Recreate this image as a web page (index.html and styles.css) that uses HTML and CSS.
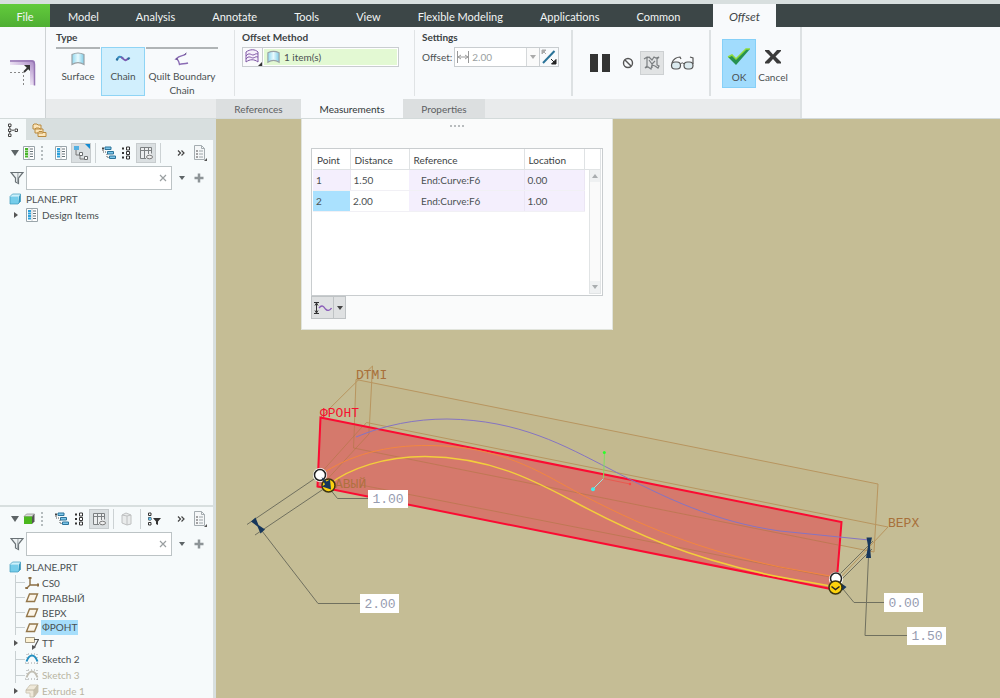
FILE: index.html
```html
<!DOCTYPE html>
<html lang="en">
<head>
<meta charset="utf-8">
<title>PLANE.PRT - Offset</title>
<link rel="stylesheet" href="styles.css">
</head>
<body>
<svg class="sprite" aria-hidden="true">
  <defs>
    <linearGradient id="blue" x1="0" x2="1"><stop offset="0" stop-color="#8fd8f0"/><stop offset=".5" stop-color="#e8fafe"/><stop offset="1" stop-color="#7ccce8"/></linearGradient>
    <linearGradient id="purple" x1="0" x2="1" y1="1" y2="0"><stop offset=".4" stop-color="#efe6f5"/><stop offset="1" stop-color="#a583c2"/></linearGradient>
  </defs>
  <symbol id="i-surface" viewBox="0 0 16 14"><path d="M2 2.500C6 .5 10 .5 14 2.500V12.500C10 10 6 10 2 12.500Z" fill="url(#blue)" stroke="#9aa2a6" stroke-width="1.200"/></symbol>
  <symbol id="i-caret" viewBox="0 0 8 6"><path d="M1 1h6L4 5z" fill="currentColor"/></symbol>
  <symbol id="i-dcaret" viewBox="0 0 8 8"><path d="M0 1h8L4 7z" fill="#5d6466"/></symbol>
  <symbol id="i-list" viewBox="0 0 12 14"><path d="M.5 .5h11v13H.5z" fill="#fff" stroke="#9aa5aa"/><path d="M2 3h3M2 5.500h3M2 8h3M2 10.500h3" stroke="currentColor" stroke-width="2"/><path d="M7 3h3M7 5.500h3M7 8h3M7 10.500h3" stroke="#667378"/><path d="M6 1v12" stroke="#9da8ad" stroke-width=".6"/></symbol>
  <symbol id="i-tree" viewBox="0 0 14 14"><path d="M1 4v2h4M5 8v3.500h3" fill="none" stroke="#555" stroke-dasharray="1 1"/><path d="M0 1.500h2v2H0z" fill="#444"/><path d="M3 1h6v2.500H3zM5.500 5.500h6V8h-6zM7.500 10h6v2.500h-6z" fill="#7cc6ea" stroke="#2b7399"/></symbol>
  <symbol id="i-struct" viewBox="0 0 8 14"><path d="M4.500 1h3v3h-3zM4.500 5.500h3v3h-3zM4.500 10h3v3h-3z" fill="#fff" stroke="#333"/><path d="M0 1.500h2v2H0zM0 6h2v2H0zM0 10.500h2v2H0z" fill="#333"/></symbol>
  <symbol id="i-cols" viewBox="0 0 14 14"><path d="M1.500 1.500h11v11h-11z" fill="#eceeef"/><path d="M1.500 12.500v-11h11v6M1.500 4.500h11M5.500 2v10.500M9.500 2v6M1.500 12.500H7" fill="none" stroke="#7c8082"/><ellipse cx="10.500" cy="11" rx="3" ry="1.800" fill="#eee" stroke="#777"/></symbol>
  <symbol id="i-page" viewBox="0 0 14 16"><path d="M1.500 .5h7l3 3v11h-10z" fill="#f5f7f8" stroke="#a5adb1"/><path d="M8.500 .5v3h3" fill="none" stroke="#a5adb1"/><path d="M3 6h2M3 9h2M3 12h2" stroke="#888" stroke-width="1.500"/><path d="M6 6h4M6 9h4M6 12h4" stroke="#9ba4a8"/><path d="M14 13v3h-3z" fill="#555"/></symbol>
  <symbol id="i-funnel" viewBox="0 0 14 14"><path d="M1 1.500h12L8.500 7v5.500l-3-1.500V7z" fill="#edf2f3" stroke="#6a7276" stroke-width="1.200"/><path d="M8 2L7.500 12" stroke="#9aa2a6"/></symbol>
  <symbol id="i-plus" viewBox="0 0 10 10"><path d="M5 .5v9M.5 5h9" stroke="#8d9497" stroke-width="2.500"/></symbol>
  <symbol id="i-part" viewBox="0 0 12 12"><path d="M1 3.500L3.500 1h8L10 3.500z" fill="#cdf1fb"/><path d="M10 3.500L11.500 1v7.500L9 11z" fill="#2f93bb"/><path d="M1 3.500h8.500V11H1z" fill="#76cdea"/><path d="M1 3.500L3.500 1h8v7.500L9 11H1z" fill="none" stroke="#3c98bc" stroke-width=".7"/></symbol>
  <symbol id="i-plane" viewBox="0 0 14 12"><path d="M4.500 2h8L9.500 9.500h-8z" fill="#fbf5e9" stroke="#94774a" stroke-width="1.400"/></symbol>
  <symbol id="i-sketch" viewBox="0 0 14 12"><path d="M2 1v10M12 1v10M0 10h14M3 1h9" fill="none" stroke="#888" stroke-width=".8" stroke-dasharray="1 2"/><path d="M1.500 8.500C3.500 3 5 2.500 7 2.500s3.500 .5 5.500 6" fill="none" stroke="currentColor" stroke-width="2"/></symbol>
  <symbol id="i-more" viewBox="0 0 8 6"><path d="M1 .5L3.500 3 1 5.500M4.500 .5L7 3 4.500 5.500" fill="none" stroke="#444" stroke-width="1.200"/></symbol>
  <symbol id="i-arrow" viewBox="0 0 4 6"><path d="M0 0l4 3-4 3z" fill="#555"/></symbol>
  <symbol id="i-x" viewBox="0 0 8 8"><path d="M1 1l6 6M7 1L1 7" stroke="#9a9fa1" stroke-width="1.200"/></symbol>
</svg>

<div class="titlebar"></div>
<nav class="menubar">
  <button class="menu file">File</button>
  <div class="menus">
    <button class="menu">Model</button><button class="menu">Analysis</button><button class="menu">Annotate</button><button class="menu">Tools</button><button class="menu">View</button><button class="menu">Flexible Modeling</button><button class="menu">Applications</button><button class="menu">Common</button>
  </div>
  <button class="menu active">Offset</button>
</nav>

<header class="ribbon">
  <div class="feature">
    <svg width="26" height="26" viewBox="0 0 26 26"><path d="M0 0h22q3 0 3 3v22h-5V5H0z" fill="url(#purple)"/><path d="M0 1h21q3.500 0 3.500 3.500v21" fill="none" stroke="#9676b4" stroke-width="1.500"/><path d="M0 12.500h13.500V25" fill="none" stroke="#888" stroke-dasharray="2 2"/><path d="M14 12l5-5" stroke="#333" stroke-width="1.800"/><path d="M14 5h6v6z" fill="#333"/></svg>
  </div>
  <div class="dash">
    <div class="groups">
      <section class="group type">
        <h2>Type</h2>
        <div class="types">
          <button class="tool"><svg width="16" height="14"><use href="#i-surface"/></svg>Surface</button>
          <button class="tool on"><svg width="16" height="14" viewBox="0 0 16 14"><path d="M2 8C3.500 3.500 6 4.500 8 6.500" fill="none" stroke="#3b8fc2" stroke-width="2"/><path d="M6 5C9 7 10 10.500 13.500 6" fill="none" stroke="#7a5bb0" stroke-width="2"/><path d="M1.500 8.500l1-2M13 7.500l1.500-2" stroke="#286e9c" stroke-width="2"/></svg>Chain</button>
          <button class="tool wide"><svg width="16" height="14" viewBox="0 0 16 14"><path d="M12 2C9 4.500 6 2.500 2 7c2 0 3 3 3.500 5.500C8 11 10 12.500 14 11" fill="none" stroke="#8a6bb4" stroke-width="1.400"/><path d="M10.500 2.500l2-1.500M2 7h2" stroke="#5b4680"/></svg>Quilt Boundary<br>Chain</button>
        </div>
      </section>
      <section class="group method">
        <h2>Offset Method</h2>
        <div class="collector">
          <button class="pick" aria-label="Offset method"><svg width="18" height="18" viewBox="0 0 18 18"><path d="M2 4C6 1 11 1 14 4v10C10 11 6 11 2 14z" fill="#f6effb" stroke="#8058a6"/><path d="M2 8c3-4 5-1 7-1s2-2 5-1M2 11c3-4 5-1 7-1s2-2 5-1" fill="none" stroke="#8058a6"/><path d="M18 14v4h-4z" fill="#333"/></svg></button>
          <button class="items"><svg width="15" height="14"><use href="#i-surface"/></svg>1 item(s)</button>
        </div>
      </section>
      <section class="group settings">
        <h2>Settings</h2>
        <div class="field">
          <label for="offset">Offset:</label>
          <div class="combo">
            <svg width="14" height="14" viewBox="0 0 14 14"><path d="M1.500 1v12M12.500 1v12M2 7h10M5 5L2 7l3 2M9 5l3 2-3 2" fill="none" stroke="#999"/></svg>
            <input id="offset" type="text" value="2.00" disabled>
            <button class="drop" disabled aria-label="Values"><svg width="8" height="6"><use href="#i-caret"/></svg></button>
            <button class="flip" aria-label="Flip side"><svg width="16" height="16" viewBox="0 0 16 16"><path d="M2 14L13.500 2" stroke="#2a7399" stroke-width="2"/><path d="M1 1h4L1 5zM3 3l2 2" fill="#aaa" stroke="#aaa"/><path d="M15 15h-4.500L15 10.500zM10 10l3 3" fill="#222" stroke="#222"/></svg></button>
          </div>
        </div>
      </section>
      <section class="group controls">
        <button class="ic pause" aria-label="Pause"><svg width="20" height="18" viewBox="0 0 20 18"><path d="M0 0h8v18H0zM12 0h8v18h-8z" fill="#333"/></svg></button>
        <button class="ic" aria-label="No preview"><svg width="12" height="12" viewBox="0 0 12 12"><circle cx="6" cy="6" r="4.500" fill="none" stroke="#555" stroke-width="1.400"/><path d="M3 3l6 6" stroke="#555" stroke-width="1.400"/></svg></button>
        <button class="ic boxed" aria-label="Attached preview"><svg width="18" height="16" viewBox="0 0 18 16"><path d="M1 4l3-2v9l-2 2 3-1 3 2 1-4 3 1 3 2 1-2-2-1V4l2-2-3 1-2-1-2 3-3-3-2 1M6 5l3 4 3-3M9 9v4" fill="none" stroke="#7b7f82" stroke-width="1.200"/></svg></button>
        <button class="ic" aria-label="Verify"><svg width="24" height="16" viewBox="0 0 24 16"><path d="M2 8C3 4 7 2 10 2l1 2M23 9V3l-3-1" fill="none" stroke="#555" stroke-width="1.200"/><rect x="1.500" y="7" width="9" height="7" rx="3.500" fill="#dcebf0" stroke="#555" stroke-width="1.200"/><rect x="14" y="7" width="9" height="7" rx="3.500" fill="#dcebf0" stroke="#555" stroke-width="1.200"/><path d="M10.500 9c1-1.500 2.500-1.500 3.500 0" fill="none" stroke="#555"/></svg></button>
      </section>
      <section class="group finish">
        <button class="end ok"><svg width="24" height="20" viewBox="0 0 24 20"><path d="M1 10l4-2 4 4L19 2h4L9 18z" fill="#279150"/><path d="M1 10l4-2 4 4L19 2h4" fill="none" stroke="#8edb3a" stroke-width="1.500"/></svg>OK</button>
        <button class="end"><svg width="24" height="20" viewBox="0 0 24 20"><path d="M4 3h4l4 4.500L16 3h4v1l-5.500 5.500L20 15v1.500h-4L12 12l-4 4.500H4V15l5.500-5.500L4 4z" fill="#3b3b3b"/></svg>Cancel</button>
      </section>
    </div>
    <div class="tabs">
      <button class="tab refs">References</button>
      <button class="tab meas">Measurements</button>
      <button class="tab props">Properties</button>
    </div>
  </div>
</header>

<main class="work">
  <aside class="side">
    <section class="navigator">
      <div class="sidetabs">
        <button class="stab on" aria-label="Model tree"><svg width="12" height="14" viewBox="0 0 12 14"><path d="M1.500 1h2.500v2.500H1.500zM1.500 6h2.500v2.500H1.500zM1.500 11h2.500v2.500H1.500zM8 6h2.500v2.500H8z" fill="#fff" stroke="#444"/><path d="M5 7.200h2M2.700 4v1.500M2.700 9v1.500" stroke="#444"/></svg></button>
        <button class="stab" aria-label="Folders"><svg width="15" height="14" viewBox="0 0 15 14"><path d="M1 2l1-1h3l1 1h3v4H1zM3 6l1-1h3l1 1h3v4H3zM6 9.500l1-1h3l1 1h3v4H6z" fill="#fbe5bb" stroke="#b98a3f"/></svg></button>
      </div>
      <div class="bar">
        <svg class="lead" width="8" height="8"><use href="#i-dcaret"/></svg>
        <button class="mini green" aria-label="Model"><svg width="12" height="14"><use href="#i-list"/></svg></button>
        <span class="grip"></span>
        <button class="mini sky" aria-label="Design items"><svg width="12" height="14"><use href="#i-list"/></svg></button>
        <button class="mini sel" aria-label="Tree view"><svg width="18" height="18" viewBox="0 0 18 18"><path d="M4 5v6h4M8 11v4h5" fill="none" stroke="#777"/><path d="M2 2h5v4H2z" fill="#55b1e2"/><path d="M7.500 8.500h3v3h-3zM12.500 12.500h3v3h-3z" fill="#fff" stroke="#6a6e70"/><path d="M13 0h5v5z" fill="#138bd2"/></svg></button>
        <span class="sep"></span>
        <button class="mini" aria-label="Expand"><svg width="14" height="14"><use href="#i-tree"/></svg></button>
        <button class="mini" aria-label="Collapse"><svg width="8" height="14"><use href="#i-struct"/></svg></button>
        <button class="mini sel cols" aria-label="Columns"><svg width="14" height="14"><use href="#i-cols"/></svg></button>
        <span class="sep"></span>
        <button class="mini push" aria-label="More"><svg width="8" height="6"><use href="#i-more"/></svg></button>
        <button class="mini last" aria-label="Settings"><svg width="14" height="16"><use href="#i-page"/></svg></button>
      </div>
      <div class="filter">
        <svg width="14" height="14"><use href="#i-funnel"/></svg>
        <div class="search"><input type="text" aria-label="Filter design items"><button aria-label="Clear"><svg width="8" height="8"><use href="#i-x"/></svg></button></div>
        <button class="mini" aria-label="History"><svg width="8" height="6"><use href="#i-caret"/></svg></button>
        <button class="mini" aria-label="Add"><svg width="10" height="10"><use href="#i-plus"/></svg></button>
      </div>
      <ul class="tree">
        <li class="root"><svg width="12" height="12"><use href="#i-part"/></svg><span>PLANE.PRT</span></li>
        <li class="feat sky"><svg class="tw" width="4" height="6"><use href="#i-arrow"/></svg><svg class="fi" width="12" height="14"><use href="#i-list"/></svg><span>Design Items</span></li>
      </ul>
    </section>
    <section class="navigator lower">
      <div class="bar">
        <svg class="lead" width="8" height="8"><use href="#i-dcaret"/></svg>
        <button class="mini" aria-label="Model"><svg width="12" height="12" viewBox="0 0 12 12"><path d="M1 3.500L3.500 1h8L9 3.500z" fill="#ddd" stroke="#888" stroke-width=".7"/><path d="M9 3.500L11.500 1v7.500L9 11z" fill="#555"/><path d="M1 3.500h8V11H1z" fill="#4bb81e"/></svg></button>
        <span class="grip"></span>
        <button class="mini" aria-label="Expand"><svg width="14" height="14"><use href="#i-tree"/></svg></button>
        <button class="mini" aria-label="Collapse"><svg width="8" height="14"><use href="#i-struct"/></svg></button>
        <button class="mini sel cols" aria-label="Columns"><svg width="14" height="14"><use href="#i-cols"/></svg></button>
        <span class="sep"></span>
        <button class="mini faded" aria-label="Preview"><svg width="14" height="14" viewBox="0 0 14 14"><path d="M2 3l4-2 5 2v9l-4 1-5-2z" fill="#ddd" stroke="#888"/><path d="M7 4v9M2 3l5 1 4-1" fill="none" stroke="#888"/></svg></button>
        <span class="sep"></span>
        <button class="mini" aria-label="Filter tree"><svg width="14" height="14" viewBox="0 0 14 14"><path d="M1.500 1h2.500v2.500H1.500zM1.500 5.500h2.500V8H1.500zM1.500 10.500h2.500V13H1.500z" fill="#fff" stroke="#333"/><path d="M1.500 5.500h2.500V8H1.500z" fill="#61bde8"/><path d="M6 6h8l-3 3.500V13l-2-1V9.500z" fill="#333"/></svg></button>
        <button class="mini push" aria-label="More"><svg width="8" height="6"><use href="#i-more"/></svg></button>
        <button class="mini last" aria-label="Settings"><svg width="14" height="16"><use href="#i-page"/></svg></button>
      </div>
      <div class="filter">
        <svg width="14" height="14"><use href="#i-funnel"/></svg>
        <div class="search"><input type="text" aria-label="Filter model tree"><button aria-label="Clear"><svg width="8" height="8"><use href="#i-x"/></svg></button></div>
        <button class="mini" aria-label="History"><svg width="8" height="6"><use href="#i-caret"/></svg></button>
        <button class="mini" aria-label="Add"><svg width="10" height="10"><use href="#i-plus"/></svg></button>
      </div>
      <ul class="tree">
        <li class="root"><svg width="12" height="12"><use href="#i-part"/></svg><span>PLANE.PRT</span></li>
        <li class="datum"><i class="tw"></i><svg class="fi" width="14" height="12" viewBox="0 0 14 12"><path d="M5 0v8h9M5 8l-4 4M3.500 1.500L5 0l1.500 1.500M12.500 6.500L14 8l-1.500 1.500M1 10v2h2" fill="none" stroke="#8b6e44" stroke-width="1.400"/></svg><span>CS0</span></li>
        <li class="datum"><i class="tw"></i><svg class="fi" width="14" height="12"><use href="#i-plane"/></svg><span>ПРАВЫЙ</span></li>
        <li class="datum"><i class="tw"></i><svg class="fi" width="14" height="12"><use href="#i-plane"/></svg><span>ВЕРХ</span></li>
        <li class="datum"><i class="tw"></i><svg class="fi" width="14" height="12"><use href="#i-plane"/></svg><span class="picked">ФРОНТ</span></li>
        <li class="feat"><svg class="tw" width="4" height="6"><use href="#i-arrow"/></svg><svg class="fi" width="14" height="14" viewBox="0 0 14 14"><path d="M.5 1.500h9v5h-9z" fill="#fdf2d3" stroke="#a59b85"/><path d="M9 3.500h4.500L9 12" fill="none" stroke="#555" stroke-width="1.200"/><path d="M7 9v5l4-3z" fill="#555"/></svg><span>TT</span></li>
        <li class="feat sketch"><i class="tw"></i><svg class="fi" width="14" height="12"><use href="#i-sketch"/></svg><span>Sketch 2</span></li>
        <li class="feat off"><i class="tw"></i><svg class="fi" width="14" height="12"><use href="#i-sketch"/></svg><span>Sketch 3</span></li>
        <li class="feat off"><svg class="tw" width="4" height="6"><use href="#i-arrow"/></svg><svg class="fi" width="14" height="14" viewBox="0 0 14 14"><path d="M1 6l4-5h8v7l-4 5H5V9H1z" fill="#efe9d9" stroke="#cfc9b8"/><path d="M13 1L9 6H1M9 6v7" fill="none" stroke="#bdb6a3"/><path d="M9 6l4-5v7l-4 5z" fill="#c9c2ae"/></svg><span>Extrude 1</span></li>
      </ul>
    </section>
  </aside>

  <div class="stage">
    <svg class="scene" viewBox="216 119 784 579" preserveAspectRatio="xMinYMin slice">
      <g class="datums">
        <path class="tint" d="M356 379.500L878 484L874 552L353.500 447.500Z"/>
        <path d="M372.500 366L369 434L318 488L320.500 417.500Z"/>
        <path d="M366.500 422.500L888 527L839 579L319 477Z"/>
      </g>
      <path class="front" d="M320.500 417.500L841.500 522L836 590L317.500 486.500Z"/>
      <g class="inner">
        <path d="M354.500 425L353.500 448L838 545M362 427L319 475M369 428V434L322 485M361 485L835 578"/>
      </g>
      <path class="c-purple" d="M356 437C385 425 415 419 447 419C520 420 565 446 610 469C665 498 715 522 780 531L869 540"/>
      <path class="c-orange" d="M320 475C350 455 385 445 430 445.500C500 446 540 472 573 490C640 526 700 550 780 567L836 577"/>
      <path class="c-yellow" d="M328 485C350 468 385 456.500 425 456.500C490 457 535 481 571 500C630 532 690 559 780 577L836 587"/>
      <g class="triad"><path d="M603.500 478.500L604.500 453" stroke="#80dc62"/><path d="M603.500 478.500L593 489" stroke="#9ae3da"/><path d="M603.500 478.500L630 484" stroke="#e85a50"/><circle cx="604.300" cy="452.500" r="1.500" fill="#2aff2a"/><circle cx="593" cy="489.300" r="2" fill="#40eeee"/><circle cx="630" cy="484" r="1.200" fill="#f44"/></g>
      <text class="dname" x="356" y="379">DTMI</text>
      <text class="dname" x="888" y="527">ВЕРХ</text>
      <text class="dname dim" x="335" y="488">АВЫЙ</text>
      <text class="dname red" x="320" y="417">ФРОНТ</text>
      <g class="leaders">
        <path d="M320 475L247 524.500M328 486L255 535M262 531L318 603.500H360M329 488L337.500 498.500H369M838 576L873 541M841 580L872 549M869 545L865 635.500H907M838 583L854 602.500H884"/>
      </g>
      <path class="navy" d="M251 521.500L255.500 517.500L258.500 525L265 529.500L260.500 533.500L257.500 526.500ZM866.500 537.500h5.500L870 546l1 12h-5l2-12ZM838 581l8.500 6-4 3.500z"/>
      <circle class="halo" cx="320" cy="475" r="7"/><circle class="hnd" cx="320" cy="475" r="5.500"/>
      <circle class="gold" cx="328.500" cy="485.500" r="6.500"/>
      <path class="navy" d="M321.500 477l5 4.500 3.500-2 1 10-9-3 3-2z"/>
      <circle class="halo" cx="836" cy="579" r="7"/><circle class="hnd" cx="836" cy="578.500" r="5.500"/>
      <circle class="gold" cx="835.500" cy="587.500" r="6.500"/><path d="M831.500 586.500l4 3 4-3" fill="none" stroke="#222" stroke-width="1.500"/>
      <g class="dims">
        <rect x="368" y="490" width="40" height="18"/><text x="388" y="503">1.00</text>
        <rect x="360" y="594" width="39" height="19"/><text x="380" y="608">2.00</text>
        <rect x="884" y="593" width="39" height="19"/><text x="904" y="607">0.00</text>
        <rect x="907" y="627" width="39" height="18"/><text x="927" y="640">1.50</text>
      </g>
    </svg>

    <section class="panel">
      <div class="dots"><i></i><i></i><i></i><i></i></div>
      <div class="grid">
        <table>
          <colgroup><col class="c1"><col class="c2"><col class="c3"><col class="c4"><col></colgroup>
          <thead><tr><th>Point</th><th>Distance</th><th>Reference</th><th>Location</th><th></th></tr></thead>
          <tbody>
            <tr><td class="lav">1</td><td>1.50</td><td class="lav ref">End:Curve:F6</td><td class="lav">0.00</td><td></td></tr>
            <tr><td class="cur">2</td><td>2.00</td><td class="lav ref">End:Curve:F6</td><td class="lav">1.00</td><td></td></tr>
          </tbody>
        </table>
        <div class="scroll"><button aria-label="Up"><svg class="up" width="8" height="6"><use href="#i-caret"/></svg></button><button aria-label="Down"><svg width="8" height="6"><use href="#i-caret"/></svg></button></div>
      </div>
      <div class="split">
        <button aria-label="Measure normal to curve"><svg width="18" height="12" viewBox="0 0 18 12"><path d="M0 .5h5M0 11.500h5M2.500 1v10M1 3.500L2.500 1 4 3.500M1 8.500L2.500 11 4 8.500" fill="none" stroke="#333"/><path d="M5 6c3-4 5-1 6.500 1s4 2 6-1" fill="none" stroke="#8a5bb8" stroke-width="1.300"/></svg></button>
        <button class="more" aria-label="Options"><svg width="8" height="6"><use href="#i-caret"/></svg></button>
      </div>
    </section>
  </div>
</main>
</body>
</html>
```
FILE: styles.css
```css
* { box-sizing: border-box; }
body {
  margin: 0;
  height: 100vh;
  display: flex;
  flex-direction: column;
  overflow: hidden;
  background: #f8fafc;
  color: #4a5052;
  font: 10px/12px Lato, "Open Sans", "Noto Sans", sans-serif;
}
button, input { font: inherit; color: inherit; }
button { border: 0; padding: 0; background: none; display: flex; align-items: center; justify-content: center; }
svg { display: block; flex: none; }
.sprite { position: absolute; width: 0; height: 0; }

.titlebar { height: 4px; background: #d8dfdf; }
.menubar { display: flex; height: 23px; background: #3c4647; }
.menu { color: #f2f5f5; font-size: 11px; line-height: 14px; padding: 2px 18px 0; white-space: nowrap; }
.menu.file { width: 50px; padding: 2px 0 0; background: linear-gradient(#62cb3c, #4fae33); }
.menus { display: flex; gap: 1px; flex: 0 0 663px; }
.menu.active { width: 63px; padding: 2px 0 0; background: #f8fafc; color: #3f4648; font-size: 12px; font-style: italic; }

.ribbon { display: flex; flex: none; height: 92px; border-bottom: 1px solid #d3dada; background: #f8fafc; }
.feature { width: 46px; padding: 33px 0 0 10px; border-right: 1px solid #ced2d4; }
.dash { display: flex; flex-direction: column; width: 756px; border-right: 2px solid #dde1e3; }
.groups { display: flex; flex: 1; }
.group { margin: 3px 0; border-right: 1px solid #e0e3e5; }
.group h2 { margin: 1px 0 3px; font-size: 10px; line-height: 13px; color: #3c4244; }
.type { width: 189px; padding-left: 10px; }
.method { width: 180px; padding-left: 7px; }
.settings { width: 158px; padding-left: 7px; border-right: 2px solid #dde1e3; }
.controls { width: 138px; display: flex; align-items: center; gap: 6px; padding-left: 17px; border-right: 2px solid #dde1e3; }
.finish { flex: 1; display: flex; align-items: flex-start; padding: 9px 0 0 11px; border: 0; }

.types { display: flex; gap: 1px; }
.tool { width: 44px; height: 49px; flex-direction: column; justify-content: flex-start; gap: 3px; padding-top: 3px; line-height: 14px; border-top: 2px solid #b0b4b6; }
.tool.wide { width: 72px; display: block; white-space: nowrap; }
.tool.wide svg { margin: 0 auto 3px; }
.tool.on { padding-top: 4px; border: 1px solid #8fd4f5; background: #d1effd; }

.collector { display: flex; width: 157px; height: 20px; border: 1px solid #c9cdd0; background: #fff; }
.pick { width: 20px; border-right: 1px solid #c9cdd0; background: #fafafc; }
.items { flex: 1; justify-content: flex-start; gap: 3px; margin: 1px; padding-left: 2px; background: #e3f9d3; }
.field { display: flex; align-items: center; gap: 2px; }
.combo { display: flex; align-items: center; width: 105px; height: 20px; border: 1px solid #c9cdd0; background: #fff; color: #9a9fa2; padding-left: 1px; }
.combo input { width: 0; flex: 1; border: 0; padding: 0 2px; background: none; color: #9a9fa2; }
.drop { width: 13px; height: 18px; color: #aaa; border-left: 1px solid #d5d8da; background: #fafafa; }
.flip { width: 19px; height: 18px; border-left: 1px solid #c9cdd0; background: #f8fafc; }
.ic.pause { margin-right: 6px; }
.ic.boxed { width: 24px; height: 24px; border: 1px solid #cdd0d2; background: #e1e3e4; }
.end { width: 34px; height: 49px; flex-direction: column; justify-content: flex-start; gap: 4px; padding-top: 8px; }
.end.ok { background: #a1dcfd; border: 1px solid #86d0f8; padding-top: 7px; }

.tabs { display: flex; height: 20px; padding-left: 170px; background: #e9ebec; }
.tab { background: #dcdfe0; color: #5c6163; padding-top: 1px; }
.refs { width: 85px; }
.meas { width: 102px; background: #f8fafc; color: #303638; }
.props { width: 82px; }

.work { display: flex; flex: 1; min-height: 0; }
.side { display: grid; grid-template-rows: minmax(0, 2fr) minmax(0, 1fr); width: 216px; border-right: 3px solid #d8dfdf; background: #f6fafb; }
.navigator { overflow: hidden; }
.sidetabs { display: flex; height: 21px; background: #d8dfdf; }
.stab { width: 26px; }
.stab.on { background: #f6fafb; }
.bar { display: flex; align-items: center; height: 22px; margin-top: 2px; padding: 0 6px 0 11px; gap: 6px; }
.bar .lead { margin-right: -2px; }
.mini { color: #5d6466; }
.mini.green { color: #48b52a; }
.mini.sky, .feat.sky { color: #2ca1dc; }
.mini.sel { width: 20px; height: 20px; margin: 0 -2px; border: 1px solid #c7ccce; background: #dadfe1; }
.mini.sel.cols { margin: 0 -2px 0 0; }
.mini.push { margin-left: auto; }
.mini.last { margin-left: 2px; }
.mini.faded { opacity: .5; }
.sep { width: 1px; height: 20px; background: #ccd2d4; }
.grip { width: 2px; height: 14px; margin-right: 6px; background: repeating-linear-gradient(#b5bcbe 0 2px, transparent 2px 4px); }
.filter { display: flex; align-items: center; height: 27px; padding: 0 7px 0 10px; gap: 2px; }
.filter > .mini { width: 15px; height: 15px; }
.search { display: flex; flex: 1; height: 24px; border: 1px solid #bcc3c5; background: #fff; }
.search input { width: 0; flex: 1; border: 0; padding: 0 4px; outline: 0; background: none; }
.search button { width: 16px; }
.lower { border-top: 2px solid #d8dfdf; }
.lower .bar { margin-top: 1px; }
.lower .tree { margin-top: 2px; }

.tree { margin: 0; padding: 0; list-style: none; }
.tree li { display: flex; align-items: center; height: 16px; padding-left: 15px; }
.tree li span { color: #4a5052; white-space: nowrap; padding: 0 1px; margin-left: 2px; }
.tree .root { padding-left: 9px; }
.tree .root span { margin-left: 4px; }
.tree .datum { height: 15px; }
.tree .tw { flex: none; width: 4px; margin: 0 7px 0 -1px; }
.tree i.tw { align-self: stretch; width: 10px; margin: 0; border-left: 1px solid #c9d0d2; background: linear-gradient(#c9d0d2, #c9d0d2) center / 100% 1px no-repeat; }
.tree .fi { width: 14px; }
.tree li .picked { height: 15px; line-height: 15px; background: #a6defb; }
.tree .sketch { color: #248fc0; }
.tree .off { color: #c2bfb4; }
.tree .off span { color: #b9b5a2; }

.stage { position: relative; flex: 1; min-width: 0; overflow: hidden; background: #c5bd95; }
.scene { width: 100%; height: 100%; }
.datums path { fill: none; stroke: #b8955f; stroke-width: 1; }
.datums .tint { fill: #b89c6620; }
.inner path { fill: none; stroke: #b0764599; stroke-width: 1; }
.front { fill: #d5796c; stroke: #fb0b32; stroke-width: 2; }
.c-purple, .c-orange, .c-yellow { fill: none; stroke-width: 1; }
.c-purple { stroke: #8574c2; }
.c-orange { stroke: #f3863f; }
.c-yellow { stroke: #f3ce3b; stroke-width: 1.5; }
.triad path { stroke-width: 1; }
.leaders path { fill: none; stroke: #70705f; stroke-width: 1; }
.navy { fill: #17375c; }
.dname { font: 13px "Liberation Mono", monospace; fill: #a8703a; }
.dname.red { fill: #f5112f; }
.dname.dim { fill: #ae713e; }
.halo { fill: #fff; }
.hnd { fill: #fff; stroke: #222; stroke-width: 1.5; }
.gold { fill: #fcd20d; stroke: #3c3510; stroke-width: 1.5; }
.dims rect { fill: #fff; }
.dims text { font: 13px "Liberation Mono", monospace; fill: #969bb0; text-anchor: middle; }

.panel { position: absolute; left: 85px; top: 0; width: 312px; padding: 6px 9px 10px; background: #fafbfb; border: 1px solid #e1e4dc; border-top: 0; }
.dots { display: flex; justify-content: center; gap: 2px; height: 23px; }
.dots i { width: 2px; height: 2px; background: #b8bcbe; }
.grid { height: 148px; border: 1px solid #c9cdcf; background: #fff; padding: 0 1px; position: relative; }
table { width: 100%; border-collapse: collapse; table-layout: fixed; }
.c1 { width: 37px; } .c2 { width: 59px; } .c3 { width: 115px; } .c4 { width: 60px; }
th { height: 20px; padding: 2px 4px 0; text-align: left; font-weight: 400; color: #3c4244; border-right: 1px solid #dfe2e4; border-bottom: 1px solid #dfe2e4; }
td { height: 21px; padding: 0 3px; border-bottom: 1px solid #f1f0f5; }
td:last-child { border: 0; }
td.lav { background: #f4effd; border-right: 1px solid #ebe6f4; }
td.ref { padding-left: 12px; }
td.cur { background: #aae1fe; }
.scroll { position: absolute; right: 1px; top: 20px; bottom: 1px; width: 12px; display: flex; flex-direction: column; justify-content: space-between; border: 1px solid #e1e4e5; background: #fafafa; }
.scroll button { height: 12px; color: #a9adaf; background: #eff1f2; }
.scroll .up { transform: rotate(180deg); }
.split { display: flex; width: 35px; height: 23px; border: 1px solid #bfc3c5; background: #dfe1e2; }
.split button { flex: 1; color: #444; }
.split .more { flex: 0 0 12px; border-left: 1px solid #bfc3c5; }
```
